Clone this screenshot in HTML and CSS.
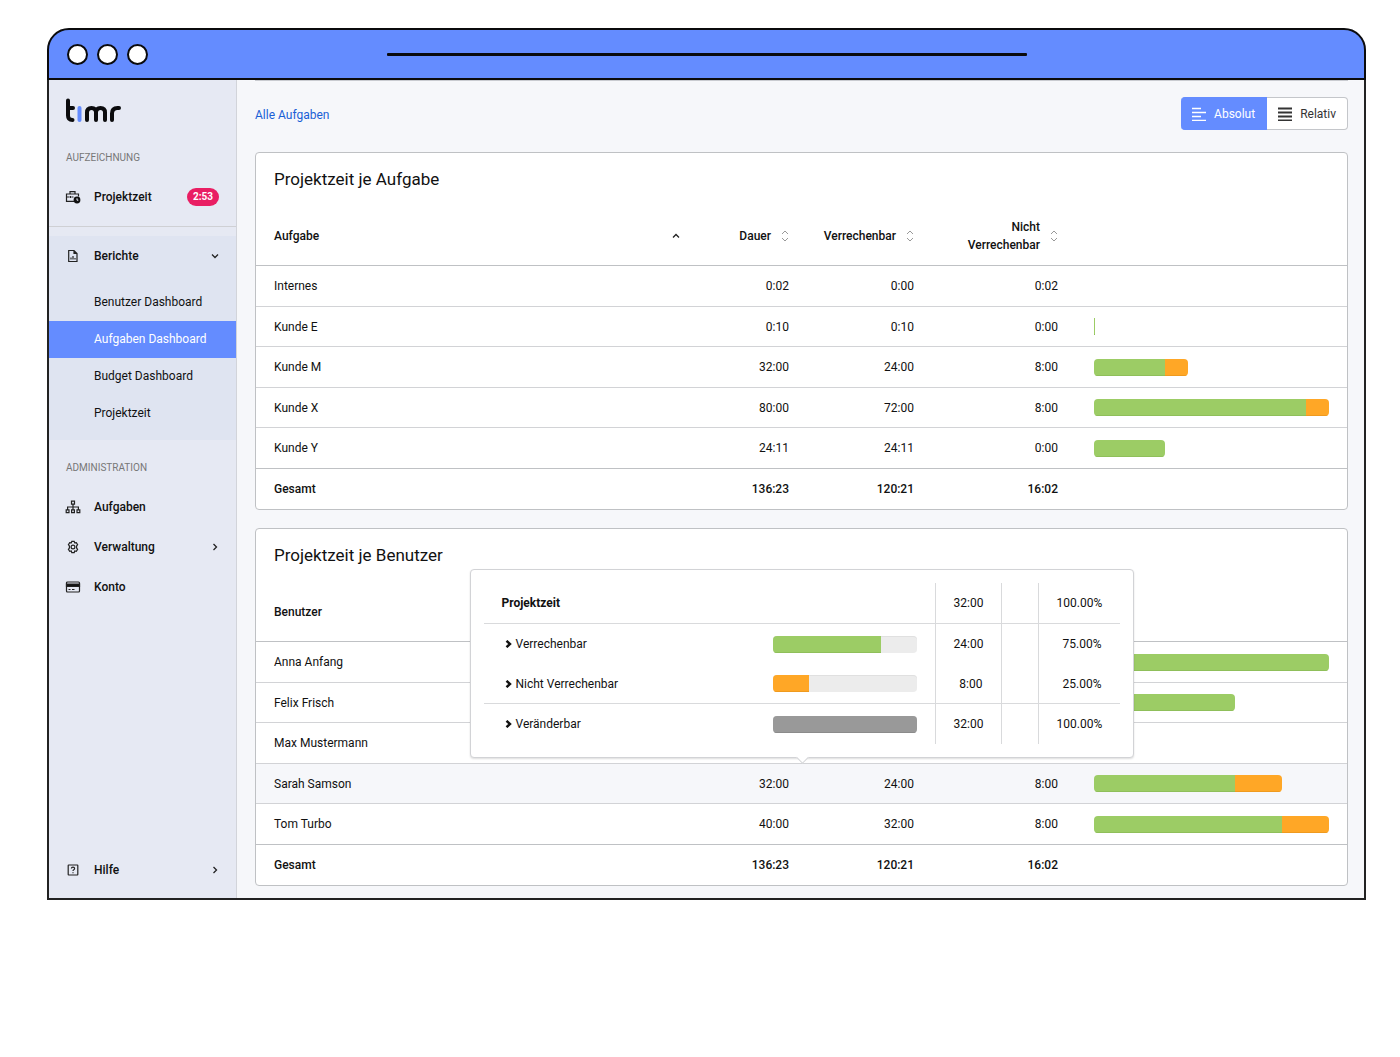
FILE: index.html
```html
<!DOCTYPE html>
<html lang="de">
<head>
<meta charset="utf-8">
<meta name="viewport" content="width=device-width, initial-scale=1">
<title>timr – Aufgaben Dashboard</title>
<link rel="stylesheet" href="styles.css">
</head>
<body>
<svg class="sprite" aria-hidden="true">
  <symbol id="sorter" viewBox="0 0 8 12"><path d="M1 4l3-3 3 3M1 8l3 3 3-3"/></symbol>
  <symbol id="chevron" viewBox="0 0 8 8"><path d="M2.5 1l3 3-3 3"/></symbol>
  <symbol id="caret" viewBox="0 0 8 8"><path d="M1.500 .8L5 4 1.500 7.200"/></symbol>
</svg>
<div class="window">
  <div class="titlebar">
    <div class="dots"><span class="dot"></span><span class="dot"></span><span class="dot"></span></div>
    <div class="address"></div>
  </div>
  <div class="frame">
    <aside class="sidebar">
      <a class="logo" href="#" aria-label="timr">
        <svg width="58" height="26" viewBox="0 0 58 26" fill="none" stroke-width="4" stroke-linecap="round" stroke-linejoin="round">
          <path stroke="#0b0b0d" d="M3 3.500v15q0 4.500 4.500 4.500M3 11h5"/>
          <path stroke="#648cff" d="M14.500 11v12"/>
          <path stroke="#0b0b0d" d="M22 23v-7.500q0-4.500 4.500-4.500t4.500 4.500v7.500M31 15.500q0-4.500 4.500-4.500t4.500 4.500v7.500M47 23v-6.500q0-5.500 5.500-5.500H54"/>
        </svg>
      </a>
      <h2 class="section">AUFZEICHNUNG</h2>
      <a class="item" href="#">
        <svg class="icon" viewBox="0 0 16 14"><path d="M5 4V1.700h5V4M9 11.300H1.500V4h12v2.500M1.500 7h3M6.500 7h2M5.500 6v2"/><circle cx="12" cy="10" r="3.400" fill="#111" stroke="none"/><path d="M12 8.300V10.200h1.300" stroke="#e7eaf4" stroke-width="1"/></svg>
        <span class="label">Projektzeit</span><span class="badge">2:53</span>
      </a>
      <hr class="divider">
      <div class="group">
        <button class="item" type="button" aria-expanded="true">
          <svg class="icon" viewBox="0 0 16 14"><path d="M3.700 1.500h5.300l3 3v8h-8.300zM9 1.500v3h3M6 8.500v2M8 7v3.500M10 9v1.500"/></svg>
          <span class="label">Berichte</span><svg class="chevron down"><use href="#chevron"/></svg>
        </button>
        <div class="subitems">
          <a class="subitem" href="#">Benutzer Dashboard</a>
          <a class="subitem active" href="#" aria-current="page">Aufgaben Dashboard</a>
          <a class="subitem" href="#">Budget Dashboard</a>
          <a class="subitem" href="#">Projektzeit</a>
        </div>
      </div>
      <h2 class="section">ADMINISTRATION</h2>
      <a class="item" href="#">
        <svg class="icon" viewBox="0 0 16 14"><path d="M6.500 1.200h3v3h-3zM1.200 9.800h2.800v2.800H1.200zM6.600 9.800h2.800v2.800H6.600zM12 9.800h2.800v2.800H12zM8 4.200v5.600M2.600 9.800V7h10.800v2.800"/></svg>
        <span class="label">Aufgaben</span>
      </a>
      <button class="item" type="button" aria-expanded="false">
        <svg class="icon" viewBox="0 0 16 14"><path d="M6.800 1.400h2.400l.5 1.500 1.600-.2 1.300 2-1 1.300v2l1 1.300-1.300 2-1.600-.3-.5 1.600H6.800l-.5-1.600-1.600.3-1.300-2 1-1.300V6l-1-1.300 1.300-2 1.600.2z"/><circle cx="8" cy="7" r="1.900"/></svg>
        <span class="label">Verwaltung</span><svg class="chevron"><use href="#chevron"/></svg>
      </button>
      <a class="item" href="#">
        <svg class="icon" viewBox="0 0 16 14"><rect x="1.500" y="2" width="13" height="10" rx="1"/><path fill="#111" d="M1.500 4h13v2.300h-13z"/><path d="M3.500 9.500h2M7 9.500h2.500"/></svg>
        <span class="label">Konto</span>
      </a>
      <button class="item help" type="button" aria-expanded="false">
        <svg class="icon" viewBox="0 0 16 14"><rect x="3.200" y="2" width="9.600" height="10" rx=".5"/><path d="M6.400 5.500q0-1.300 1.600-1.300t1.600 1.300q0 .8-.8 1.200T8 8M8 9.300v1"/></svg>
        <span class="label">Hilfe</span><svg class="chevron"><use href="#chevron"/></svg>
      </button>
    </aside>

    <main class="main">
      <div class="toolbar">
        <a class="crumb" href="#">Alle Aufgaben</a>
        <div class="toggle" role="group" aria-label="Darstellung">
          <button class="toggle-button on" type="button" aria-pressed="true">
            <svg width="14" height="14" viewBox="0 0 14 14"><path d="M0 1.500h9M0 5.500h14M0 9.500h9M0 13.500h14"/></svg>Absolut
          </button>
          <button class="toggle-button" type="button" aria-pressed="false">
            <svg width="14" height="14" viewBox="0 0 14 14"><path d="M0 1.500h14M0 5.500h14M0 9.500h14M0 13.500h14"/></svg>Relativ
          </button>
        </div>
      </div>

      <section class="card">
        <h1 class="title">Projektzeit je Aufgabe</h1>
        <table class="data">
          <colgroup><col><col class="c-dauer"><col class="c-verr"><col class="c-nicht"><col class="c-bar"></colgroup>
          <thead><tr>
            <th><button class="sort spread" type="button">Aufgabe<svg class="chevron up"><use href="#chevron"/></svg></button></th>
            <th><button class="sort" type="button">Dauer<svg class="sorter"><use href="#sorter"/></svg></button></th>
            <th><button class="sort" type="button">Verrechenbar<svg class="sorter"><use href="#sorter"/></svg></button></th>
            <th><button class="sort" type="button">Nicht<br>Verrechenbar<svg class="sorter"><use href="#sorter"/></svg></button></th>
            <td></td>
          </tr></thead>
          <tbody>
            <tr><td>Internes</td><td>0:02</td><td>0:00</td><td>0:02</td><td></td></tr>
            <tr><td>Kunde E</td><td>0:10</td><td>0:10</td><td>0:00</td><td><div class="bar sliver" style="width:0.2%"><span class="yes" style="width:100%"></span></div></td></tr>
            <tr><td>Kunde M</td><td>32:00</td><td>24:00</td><td>8:00</td><td><div class="bar" style="width:40%"><span class="yes" style="width:75%"></span><span class="no" style="width:25%"></span></div></td></tr>
            <tr><td>Kunde X</td><td>80:00</td><td>72:00</td><td>8:00</td><td><div class="bar" style="width:100%"><span class="yes" style="width:90%"></span><span class="no" style="width:10%"></span></div></td></tr>
            <tr><td>Kunde Y</td><td>24:11</td><td>24:11</td><td>0:00</td><td><div class="bar" style="width:30.2%"><span class="yes" style="width:100%"></span></div></td></tr>
            <tr class="total"><th>Gesamt</th><td>136:23</td><td>120:21</td><td>16:02</td><td></td></tr>
          </tbody>
        </table>
      </section>

      <section class="card">
        <h1 class="title">Projektzeit je Benutzer</h1>
        <table class="data">
          <colgroup><col><col class="c-dauer"><col class="c-verr"><col class="c-nicht"><col class="c-bar"></colgroup>
          <thead><tr>
            <th><button class="sort spread" type="button">Benutzer<svg class="chevron up"><use href="#chevron"/></svg></button></th>
            <td></td><td></td><td></td><td></td>
          </tr></thead>
          <tbody>
            <tr><td>Anna Anfang</td><td></td><td></td><td></td><td><div class="bar" style="width:100%"><span class="yes" style="width:100%"></span></div></td></tr>
            <tr><td>Felix Frisch</td><td></td><td></td><td></td><td><div class="bar" style="width:60%"><span class="yes" style="width:100%"></span></div></td></tr>
            <tr><td>Max Mustermann</td><td></td><td></td><td></td><td></td></tr>
            <tr class="hovered"><td>Sarah Samson</td><td>32:00</td><td>24:00</td><td>8:00</td><td><div class="bar" style="width:80%"><span class="yes" style="width:75%"></span><span class="no" style="width:25%"></span></div></td></tr>
            <tr><td>Tom Turbo</td><td>40:00</td><td>32:00</td><td>8:00</td><td><div class="bar" style="width:100%"><span class="yes" style="width:80%"></span><span class="no" style="width:20%"></span></div></td></tr>
            <tr class="total"><th>Gesamt</th><td>136:23</td><td>120:21</td><td>16:02</td><td></td></tr>
          </tbody>
        </table>

        <div class="popover" role="tooltip">
          <table class="detail">
            <colgroup><col><col class="d-bar"><col class="d-time"><col class="d-gap"><col class="d-share"></colgroup>
            <thead>
              <tr class="ruled"><th>Projektzeit</th><td></td><td>32:00</td><td></td><td>100.00%</td></tr>
            </thead>
            <tbody>
              <tr><td><span class="entry"><svg class="caret"><use href="#caret"/></svg>Verrechenbar</span></td><td><div class="bar track"><span class="yes" style="width:75%"></span></div></td><td>24:00</td><td></td><td>75.00%</td></tr>
              <tr class="ruled"><td><span class="entry"><svg class="caret"><use href="#caret"/></svg>Nicht Verrechenbar</span></td><td><div class="bar track"><span class="no" style="width:25%"></span></div></td><td>8:00</td><td></td><td>25.00%</td></tr>
              <tr><td><span class="entry"><svg class="caret"><use href="#caret"/></svg>Veränderbar</span></td><td><div class="bar track"><span class="open" style="width:100%"></span></div></td><td>32:00</td><td></td><td>100.00%</td></tr>
            </tbody>
          </table>
        </div>
      </section>
    </main>
  </div>
</div>
</body>
</html>
```
FILE: styles.css
```css
* { box-sizing: border-box; }

body {
  margin: 0;
  background: #fff;
  color: #111;
  font: 12px/18px Roboto, "Liberation Sans", sans-serif;
}

a { color: inherit; text-decoration: none; }
button { font: inherit; color: inherit; background: none; border: 0; padding: 0; cursor: pointer; }
svg { display: block; flex: none; }
.sprite { display: none; }

/* Browser window */
.window { margin: 28px 34px 40px 47px; }

.titlebar {
  display: grid;
  grid-template-columns: 1fr minmax(0, 640px) 1fr;
  align-items: center;
  height: 52px;
  padding: 0 18px;
  background: #648cff;
  border: 2px solid #0b0b0d;
  border-radius: 22px 22px 0 0;
}
.dots { display: flex; gap: 9px; }
.dot { width: 21px; height: 21px; background: #fff; border: 2px solid #0b0b0d; border-radius: 50%; }
.address { height: 3px; background: #0b0b0d; border-radius: 1px; }

.frame {
  display: flex;
  border: 2px solid #222;
  border-top: 0;
}

/* Sidebar */
.sidebar {
  display: flex;
  flex-direction: column;
  flex: none;
  width: 188px;
  padding-bottom: 8px;
  background: #e6e9f3;
  border-right: 1px solid #d2d4da;
}
.logo { height: 59px; padding: 17px 16px 0; }
.section {
  margin: 0;
  padding: 0 17px;
  font-size: 10px;
  font-weight: 400;
  line-height: 38px;
  color: #777;
}
.item {
  display: flex;
  align-items: center;
  gap: 13px;
  width: 100%;
  height: 40px;
  padding: 0 17px 0 16px;
  font-weight: 500;
  text-align: left;
}
.icon {
  width: 16px;
  height: 14px;
  fill: none;
  stroke: #222;
  stroke-width: 1.2;
}
.label { flex: 1; }
.badge {
  padding: 0 6px;
  background: #e91e63;
  border-radius: 9px;
  color: #fff;
  font-size: 10px;
  font-weight: 700;
}
.chevron {
  width: 8px;
  height: 8px;
  fill: none;
  stroke: #222;
  stroke-width: 1.3;
}
.down { transform: rotate(90deg); }
.up { transform: rotate(-90deg); }
.divider { width: 100%; margin: 9px 0; border: 0; border-top: 1px solid #cfd0d4; }
.group { margin-bottom: 9px; background: #dfe4f1; }
.subitems { padding: 8px 0; }
.subitem { display: block; padding-left: 45px; line-height: 37px; }
.active { background: #648cff; color: #fff; }
.help { margin-top: auto; }

/* Content */
.main {
  display: flex;
  flex: 1;
  flex-direction: column;
  gap: 18px;
  min-width: 0;
  padding: 0 16px 12px 18px;
  background: #f6f7fa;
}
.toolbar {
  display: flex;
  align-items: center;
  justify-content: space-between;
  padding: 16px 0 4px;
  border-top: 1px solid #c9cbd0;
}
.crumb { padding-top: 3px; color: #1a5fd6; }
.toggle { display: flex; }
.toggle-button {
  display: flex;
  align-items: center;
  gap: 8px;
  height: 33px;
  padding: 0 11px;
  background: #fff;
  border: 1px solid #c4c6ca;
  border-left: 0;
  border-radius: 0 4px 4px 0;
  color: #333;
}
.toggle-button svg { stroke: #333; stroke-width: 2; }
.on { background: #648cff; border-color: #648cff; border-radius: 4px 0 0 4px; color: #fff; }
.on svg { stroke: #fff; stroke-width: 1.5; }

.card {
  position: relative;
  background: #fff;
  border: 1px solid #bfc1c4;
  border-radius: 4px;
}
.title { margin: 0; padding: 0 18px; font-size: 17px; font-weight: 400; line-height: 53px; }

.data, .detail { width: 100%; table-layout: fixed; border-spacing: 0; }
.c-dauer { width: 109px; }
.c-verr { width: 125px; }
.c-nicht { width: 144px; }
.c-bar { width: 271px; }

th, td { padding: 0 18px; font-weight: 400; text-align: right; }
th:first-child, td:first-child { text-align: left; }
.data thead th, .data thead td { height: 60px; border-bottom: 1px solid #bfc1c4; }
.data tbody th, .data tbody td { height: 41px; border-bottom: 1px solid #d2d3d6; }
.data tbody tr:nth-child(even) > * { height: 40px; }
.data tbody tr:nth-last-child(2) > * { border-color: #bfc1c4; }
.data .total > * { border-bottom: 0; font-weight: 500; }
.hovered { background: #f6f7fa; }

.sort {
  display: flex;
  align-items: center;
  justify-content: flex-end;
  gap: 10px;
  width: 100%;
  font-weight: 500;
  text-align: right;
}
.spread { justify-content: space-between; }
.sorter { width: 8px; height: 12px; fill: none; stroke: #999; }

.bar { display: flex; height: 17px; overflow: hidden; border-radius: 4px; }
.yes { background: #9ccc65; box-shadow: inset 0 -1px #8fbf5a; }
.no { background: #ffa726; box-shadow: inset 0 -1px #ef9a1f; }
.open { background: #999; box-shadow: inset 0 -1px #8b8b8b; }
.track { background: #ececec; box-shadow: inset 0 1px #e0e0e0; }
.sliver { min-width: 1px; border-radius: 0; }

/* Row details */
.popover {
  position: absolute;
  top: 40px;
  right: 0;
  left: 0;
  width: 664px;
  margin: 0 auto;
  padding: 13px;
  background: #fff;
  border: 1px solid #d2d3d6;
  border-radius: 4px;
  box-shadow: 0 1px 2px #0002;
}
.popover::after {
  content: "";
  position: absolute;
  bottom: -5px;
  left: 50%;
  width: 8px;
  height: 8px;
  margin-left: -4px;
  background: #fff;
  border: solid #d2d3d6;
  border-width: 0 1px 1px 0;
  transform: rotate(45deg);
}
.d-bar { width: 180px; }
.d-time { width: 66px; }
.d-gap { width: 37px; }
.d-share { width: 82px; }
.detail th, .detail td { height: 40px; }
.detail thead > tr > * { height: 41px; }
.detail .ruled > * { border-bottom: 1px solid #d9dadc; }
.detail th { font-weight: 700; }
.detail td:nth-child(n+3) { border-left: 1px solid #d9dadc; }
.entry { display: flex; align-items: center; gap: 3px; padding-left: 3px; }
.caret { width: 8px; height: 8px; fill: none; stroke: #111; stroke-width: 2.4; }
```
